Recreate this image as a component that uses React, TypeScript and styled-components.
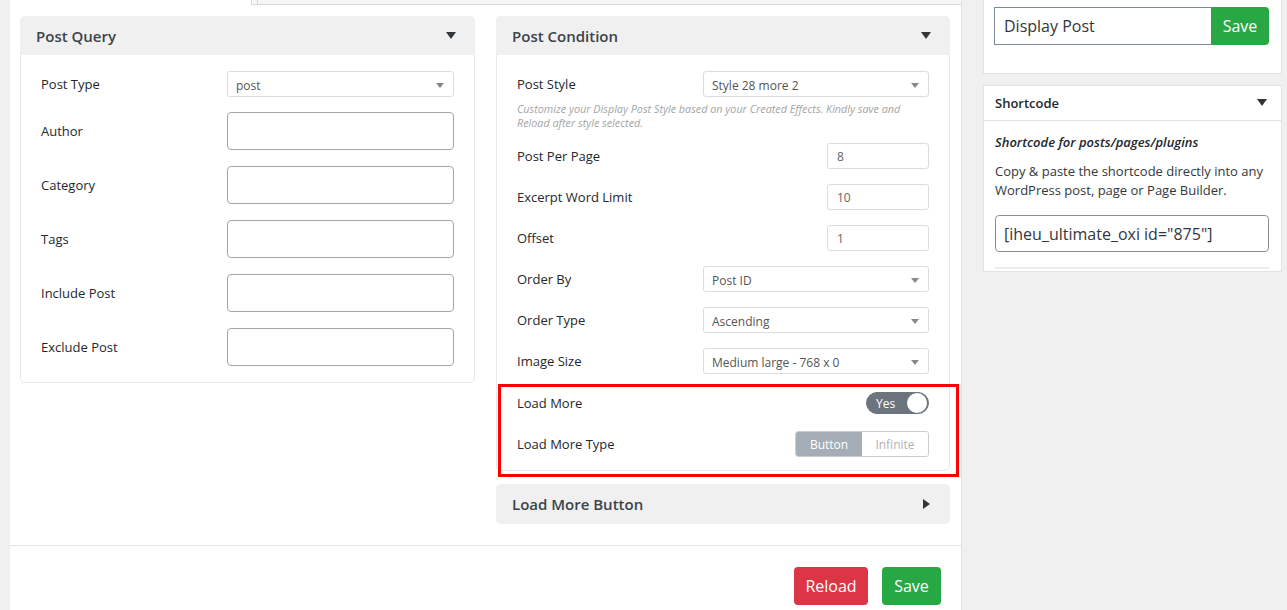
import React from "react";
import styled, { createGlobalStyle } from "styled-components";

const Global = createGlobalStyle`
  html, body { margin: 0; padding: 0; background: #f0f0f0; }
  body { font-family: "Open Sans", "Noto Sans", Arial, sans-serif; color: #23282d; overflow: hidden; }
  * { box-sizing: border-box; }
`;

const Page = styled.div`
  display: flex;
  align-items: flex-start;
  width: 1287px;
  height: 610px;
  overflow: hidden;
`;

const Main = styled.div`
  margin-left: 10px;
  width: 952px;
  min-height: 620px;
  background: #fff;
  border-right: 1px solid #e2e2e2;
  display: flex;
  flex-direction: column;
`;

const TabStrip = styled.div`
  display: flex;
  height: 5px;
`;

const TabGap = styled.div`
  width: 241px;
  background: #fff;
`;

const Tab = styled.div<{ $w?: number }>`
  ${(p) => (p.$w ? `width: ${p.$w}px;` : "flex: 1;")}
  background: #f6f6f6;
  border-left: 1px solid #d9d9d9;
  border-bottom: 1px solid #dcdcdc;
`;

const Columns = styled.div`
  display: grid;
  grid-template-columns: 455px 454px;
  column-gap: 21px;
  padding: 11px 11px 21px 10px;
  align-items: start;
`;

const Column = styled.div`
  display: flex;
  flex-direction: column;
  gap: 13px;
`;

const Card = styled.div`
  border: 1px solid #e8e8e8;
  border-radius: 5px;
  background: #fff;
`;

const CardHeader = styled.div<{ $closed?: boolean }>`
  height: ${(p) => (p.$closed ? 40 : 39)}px;
  background: #f0f0f0;
  border-radius: ${(p) => (p.$closed ? "5px" : "5px 5px 0 0")};
  margin: ${(p) => (p.$closed ? "-1px" : "-1px -1px 0")};
  display: flex;
  align-items: center;
  justify-content: space-between;
  padding: 0 19px 0 16px;
`;

const CardTitle = styled.span`
  font-size: 15px;
  font-weight: 600;
  color: #3c434a;
`;

const CardBody = styled.div<{ $pb?: number }>`
  padding: 16px 20px ${(p) => p.$pb ?? 14}px 20px;
  display: flex;
  flex-direction: column;
`;

const Row = styled.div<{ $gap?: number }>`
  display: grid;
  grid-template-columns: 186px 1fr;
  align-items: center;
  margin-bottom: ${(p) => (p.$gap ?? 15)}px;
  &:last-child { margin-bottom: 0; }
`;

const Label = styled.label`
  font-size: 13px;
  color: #23282d;
`;

const Control = styled.div<{ $end?: boolean }>`
  display: flex;
  justify-content: ${(p) => (p.$end ? "flex-end" : "stretch")};
  position: relative;
`;

const SelectBox = styled.div`
  position: relative;
  flex: 1;
  height: 26px;
  border: 1px solid #dcdcdc;
  border-radius: 3px;
  font-size: 12px;
  color: #555;
  display: flex;
  align-items: center;
  padding-left: 8px;
  padding-top: 2px;
`;

const SelectArrow = styled.span`
  position: absolute;
  right: 9px;
  top: 11px;
  width: 0;
  height: 0;
  border-left: 4px solid transparent;
  border-right: 4px solid transparent;
  border-top: 5px solid #888;
`;

const TextInput = styled.div`
  flex: 1;
  height: 38px;
  border: 1px solid #a6a6a6;
  border-radius: 4px;
`;

const NumberInput = styled.div`
  width: 102px;
  height: 26px;
  border: 1px solid #dcdcdc;
  border-radius: 3px;
  font-size: 12px;
  color: #666;
  display: flex;
  align-items: center;
  padding-left: 9px;
`;

const Help = styled.div`
  font-size: 10.8px;
  font-style: italic;
  color: #a5a5a5;
  line-height: 14px;
  margin: -10px 0 13px 0;
`;

const Group = styled.div`
  position: relative;
  display: flex;
  flex-direction: column;
  padding-top: 3px;
`;

const Highlight = styled.div`
  position: absolute;
  top: -5px;
  left: -19px;
  right: -30px;
  bottom: -20px;
  border: 3px solid #ff0000;
  pointer-events: none;
`;

const Toggle = styled.div`
  width: 63px;
  height: 22px;
  border-radius: 11px;
  background: #6c757d;
  border: 1px solid #6c757d;
  display: flex;
  align-items: center;
  justify-content: space-between;
  padding: 0 1px 0 9px;
  color: #fff;
  font-size: 12px;
`;

const Knob = styled.span`
  width: 20px;
  height: 20px;
  border-radius: 50%;
  background: #fff;
`;

const Segmented = styled.div`
  display: flex;
  width: 134px;
  height: 26px;
  border: 1px solid #c9ced3;
  border-radius: 3px;
  overflow: hidden;
`;

const Segment = styled.div<{ $active?: boolean }>`
  flex: 1;
  display: flex;
  align-items: center;
  justify-content: center;
  font-size: 12px;
  background: ${(p) => (p.$active ? "#a5aeb6" : "#fff")};
  color: ${(p) => (p.$active ? "#fff" : "#b3b3b3")};
`;

const Footer = styled.div`
  border-top: 1px solid #e5e5e5;
  display: flex;
  justify-content: flex-end;
  gap: 14px;
  padding: 21px 20px 20px 0;
`;

const ActionButton = styled.button<{ $color: string; $w: number }>`
  width: ${(p) => p.$w}px;
  height: 38px;
  border: none;
  border-radius: 4px;
  background: ${(p) => p.$color};
  color: #fff;
  font-family: inherit;
  font-size: 16px;
  padding: 0;
`;

const Side = styled.div`
  margin-left: 21px;
  width: 299px;
  display: flex;
  flex-direction: column;
  gap: 11px;
`;

const SideCard = styled.div<{ $noTop?: boolean }>`
  background: #fff;
  border: 1px solid #e2e2e2;
  ${(p) => (p.$noTop ? "border-top: none;" : "")}
`;

const NameBar = styled.div`
  display: flex;
  padding: 7px 12px 28px 10px;
`;

const NameInput = styled.div`
  flex: 1;
  height: 38px;
  border: 1px solid #7e8993;
  border-right: none;
  font-size: 16px;
  color: #32373c;
  display: flex;
  align-items: center;
  padding-left: 9px;
`;

const SaveInline = styled.div`
  width: 58px;
  height: 38px;
  background: #28a745;
  color: #fff;
  font-size: 16px;
  border-radius: 0 4px 4px 0;
  display: flex;
  align-items: center;
  justify-content: center;
`;

const SideHeader = styled.div`
  height: 35px;
  border-bottom: 1px solid #e2e2e2;
  display: flex;
  align-items: center;
  justify-content: space-between;
  padding: 0 14px 0 11px;
  font-size: 13px;
  font-weight: 600;
  color: #23282d;
`;

const SideBody = styled.div`
  padding: 12px 12px 2px 11px;
`;

const Lead = styled.div`
  font-size: 13px;
  font-weight: 600;
  font-style: italic;
  color: #23282d;
  line-height: 19px;
`;

const Para = styled.p`
  font-size: 13px;
  line-height: 19px;
  margin: 10px 0 15px;
  color: #32373c;
`;

const CodeInput = styled.div`
  height: 37px;
  border: 1px solid #8c8f94;
  border-radius: 4px;
  font-size: 16px;
  color: #32373c;
  display: flex;
  align-items: center;
  padding-left: 8px;
`;

const Rule = styled.hr`
  border: none;
  border-top: 2px solid #ececec;
  margin: 15px 0 0;
`;

const Caret = ({ dir = "down" }: { dir?: "down" | "right" }) =>
  dir === "down" ? (
    <svg width="10" height="8" viewBox="0 0 10 8">
      <path d="M0 0 L10 0 L5 7 Z" fill="#32373c" />
    </svg>
  ) : (
    <svg width="8" height="10" viewBox="0 0 8 10">
      <path d="M0 0 L7 5 L0 10 Z" fill="#32373c" />
    </svg>
  );

const Select = ({ value }: { value: string }) => (
  <SelectBox>
    {value}
    <SelectArrow />
  </SelectBox>
);

const queryFields = ["Author", "Category", "Tags", "Include Post", "Exclude Post"];

export default function App() {
  return (
    <>
      <Global />
      <Page>
        <Main>
          <TabStrip>
            <TabGap />
            <Tab $w={6} />
            <Tab />
          </TabStrip>
          <Columns>
            <Column>
              <Card>
                <CardHeader>
                  <CardTitle>Post Query</CardTitle>
                  <Caret />
                </CardHeader>
                <CardBody $pb={16}>
                  <Row>
                    <Label>Post Type</Label>
                    <Control>
                      <Select value="post" />
                    </Control>
                  </Row>
                  {queryFields.map((f) => (
                    <Row key={f} $gap={16}>
                      <Label>{f}</Label>
                      <Control>
                        <TextInput />
                      </Control>
                    </Row>
                  ))}
                </CardBody>
              </Card>
            </Column>
            <Column>
              <Card>
                <CardHeader>
                  <CardTitle>Post Condition</CardTitle>
                  <Caret />
                </CardHeader>
                <CardBody $pb={13}>
                  <Row>
                    <Label>Post Style</Label>
                    <Control>
                      <Select value="Style 28 more 2" />
                    </Control>
                  </Row>
                  <Help>
                    Customize your Display Post Style based on your Created Effects. Kindly save and
                    Reload after style selected.
                  </Help>
                  <Row>
                    <Label>Post Per Page</Label>
                    <Control $end>
                      <NumberInput>8</NumberInput>
                    </Control>
                  </Row>
                  <Row>
                    <Label>Excerpt Word Limit</Label>
                    <Control $end>
                      <NumberInput>10</NumberInput>
                    </Control>
                  </Row>
                  <Row>
                    <Label>Offset</Label>
                    <Control $end>
                      <NumberInput>1</NumberInput>
                    </Control>
                  </Row>
                  <Row>
                    <Label>Order By</Label>
                    <Control>
                      <Select value="Post ID" />
                    </Control>
                  </Row>
                  <Row>
                    <Label>Order Type</Label>
                    <Control>
                      <Select value="Ascending" />
                    </Control>
                  </Row>
                  <Row>
                    <Label>Image Size</Label>
                    <Control>
                      <Select value="Medium large - 768 x 0" />
                    </Control>
                  </Row>
                  <Group>
                    <Highlight />
                    <Row $gap={17}>
                      <Label>Load More</Label>
                      <Control $end>
                        <Toggle>
                          Yes
                          <Knob />
                        </Toggle>
                      </Control>
                    </Row>
                    <Row>
                      <Label>Load More Type</Label>
                      <Control $end>
                        <Segmented>
                          <Segment $active>Button</Segment>
                          <Segment>Infinite</Segment>
                        </Segmented>
                      </Control>
                    </Row>
                  </Group>
                </CardBody>
              </Card>
              <Card>
                <CardHeader $closed>
                  <CardTitle>Load More Button</CardTitle>
                  <Caret dir="right" />
                </CardHeader>
              </Card>
            </Column>
          </Columns>
          <Footer>
            <ActionButton $color="#dc3545" $w={74}>Reload</ActionButton>
            <ActionButton $color="#28a745" $w={59}>Save</ActionButton>
          </Footer>
        </Main>
        <Side>
          <SideCard $noTop>
            <NameBar>
              <NameInput>Display Post</NameInput>
              <SaveInline>Save</SaveInline>
            </NameBar>
          </SideCard>
          <SideCard>
            <SideHeader>
              Shortcode
              <Caret />
            </SideHeader>
            <SideBody>
              <Lead>Shortcode for posts/pages/plugins</Lead>
              <Para>
                Copy &amp; paste the shortcode directly into any WordPress post, page or Page Builder.
              </Para>
              <CodeInput>[iheu_ultimate_oxi id="875"]</CodeInput>
              <Rule />
            </SideBody>
          </SideCard>
        </Side>
      </Page>
    </>
  );
}
